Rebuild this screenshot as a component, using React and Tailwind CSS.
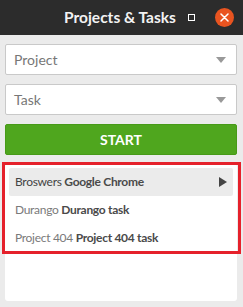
const items = [
  { project: 'Broswers', task: 'Google Chrome', active: true },
  { project: 'Durango', task: 'Durango task' },
  { project: 'Project 404', task: 'Project 404 task' },
]

const Select = ({ label }) => (
  <div className="flex h-[31px] items-center justify-between rounded-[2px] border border-[#c9c9c9] bg-white pl-[8px] pr-[10px]">
    <span className="text-[14px] text-[#777]">{label}</span>
    <span className="h-0 w-0 border-x-[5px] border-t-[6px] border-x-transparent border-t-[#999]" />
  </div>
)

export default function App() {
  return (
    <div className="relative flex h-[307px] w-[243px] flex-col bg-[#ebebeb] font-['Lato',sans-serif]">
      <div className="flex h-[35px] shrink-0 items-center bg-[#2c2c2c] pl-[64px]">
        <span className="text-[15.5px] font-bold text-[#f2f2f2]">Projects &amp; Tasks</span>
        <span className="ml-[12px] h-[7px] w-[7px] border border-white" />
        <span className="ml-[20px] flex h-[19px] w-[19px] items-center justify-center rounded-full bg-[#e95420]">
          <svg width="9" height="9" viewBox="0 0 9 9">
            <path d="M1 1L8 8M8 1L1 8" stroke="white" strokeWidth="1.5" strokeLinecap="round" />
          </svg>
        </span>
      </div>

      <div className="flex flex-1 flex-col gap-[9px] pb-[6px] pl-[5px] pr-[6px] pt-[9px]">
        <Select label="Project" />
        <Select label="Task" />
        <button className="h-[31px] rounded-[2px] border border-[#479a18] bg-[#4fa61e] text-[14px] font-bold text-white">
          START
        </button>

        <div className="relative flex-1 rounded-[3px] bg-white p-[4px]">
          {items.map((item) => (
            <div
              key={item.project}
              className={`flex h-[28px] items-center justify-between rounded-[2px] pl-[6px] pr-[6px] text-[12px] tracking-[-0.3px] ${
                item.active ? 'bg-[#ebebeb]' : ''
              }`}
            >
              <span>
                <span className={item.active ? 'text-[#444]' : 'text-[#7a7a7a]'}>{item.project}</span>{' '}
                <span className="font-bold text-[#4a4a4a]">{item.task}</span>
              </span>
              {item.active && (
                <span className="h-0 w-0 border-y-[5px] border-l-[8px] border-y-transparent border-l-[#444]" />
              )}
            </div>
          ))}
          <div className="absolute -left-[3px] -top-[2px] h-[92px] w-[239px] border-[3px] border-[#e5212b]" />
        </div>
      </div>
    </div>
  )
}
